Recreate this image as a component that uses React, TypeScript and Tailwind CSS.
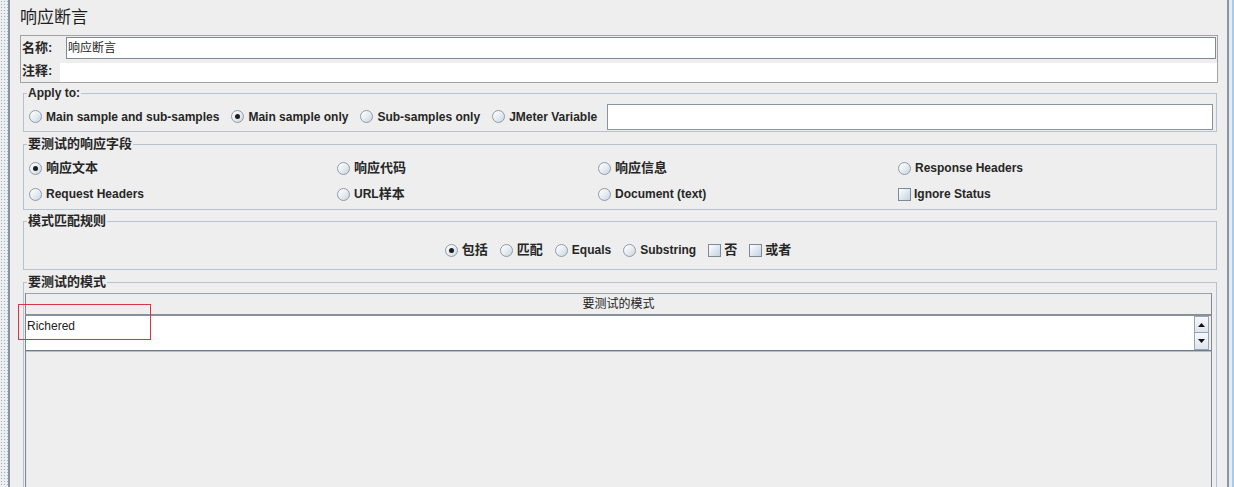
import React from "react";

const FONT = "font-['Liberation_Sans','Noto_Sans_CJK_SC',sans-serif]";

function Radio({ checked = false }: { checked?: boolean }) {
  return (
    <span className="inline-flex h-[13px] w-[13px] shrink-0 items-center justify-center rounded-full border border-[#8e9bab] bg-[linear-gradient(135deg,#ffffff_0%,#e8edf2_50%,#c9d3de_100%)]">
      {checked && <span className="h-[5px] w-[5px] rounded-full bg-[#1e1e1e]" />}
    </span>
  );
}

function Check() {
  return (
    <span className="inline-block h-[13px] w-[13px] shrink-0 border border-[#7d8b99] bg-[linear-gradient(135deg,#ffffff_0%,#e0e8f0_50%,#c3d1e0_100%)]" />
  );
}

function Cjk({ children }: { children: React.ReactNode }) {
  return <span className="text-[13px]">{children}</span>;
}

function Opt({ checked = false, children }: { checked?: boolean; children: React.ReactNode }) {
  return (
    <label className="flex items-center gap-[4px] whitespace-nowrap">
      <Radio checked={checked} />
      <span>{children}</span>
    </label>
  );
}

function CheckOpt({ children }: { children: React.ReactNode }) {
  return (
    <label className="flex items-center gap-[3px] whitespace-nowrap">
      <Check />
      <span>{children}</span>
    </label>
  );
}

function Group({
  title,
  cjk = false,
  className = "",
  children,
}: {
  title: string;
  cjk?: boolean;
  className?: string;
  children: React.ReactNode;
}) {
  return (
    <fieldset className={`ml-[13px] mr-[10px] min-w-0 shrink-0 border border-[#b7c3d0] ${className}`}>
      <legend
        className={`ml-[3px] px-[1px] font-bold leading-[14px] text-[#262626] ${cjk ? "text-[13px]" : "text-[12px]"}`}
      >
        {title}
      </legend>
      {children}
    </fieldset>
  );
}

function Arrow({ up }: { up: boolean }) {
  return (
    <svg width="7" height="4" viewBox="0 0 7 4">
      {up ? <polygon points="0,4 7,4 3.5,0" fill="#111" /> : <polygon points="0,0 7,0 3.5,4" fill="#111" />}
    </svg>
  );
}

export default function App() {
  return (
    <div className={`relative flex h-[487px] w-[1234px] overflow-hidden bg-[#eeeeee] text-[12px] text-[#262626] ${FONT}`}>
      <div className="w-[8px] shrink-0 bg-[#eceef2] bg-[radial-gradient(#a9b1bc_0.8px,transparent_1px)] bg-[length:3px_3px]" />
      <div className="w-[2px] shrink-0 bg-[#8593a3]" />

      <div className="flex min-w-0 flex-1 flex-col">
        <div className="flex h-[35px] shrink-0 items-center pl-[10px] pt-[1px] text-[17px] text-[#1e1e1e]">响应断言</div>

        <div className="ml-[10px] mr-[9px] flex h-[48px] shrink-0 flex-col border border-[#a3a3a3]">
          <div className="flex h-[24px] items-center">
            <span className="w-[45px] pl-[1px] text-[13px] font-bold">名称:</span>
            <div className="mr-[1px] flex h-[22px] flex-1 items-center border border-[#7f8a96] bg-white pl-[1px] text-[12px]">
              响应断言
            </div>
          </div>
          <div className="flex h-[22px] items-center">
            <span className="w-[39px] pl-[1px] text-[13px] font-bold">注释:</span>
            <div className="h-[19px] flex-1 self-end bg-white" />
          </div>
        </div>

        <Group title="Apply to:" className="mt-[3px]">
          <div className="flex h-[31px] items-center pl-[5px] pr-[3px] pt-[2px] font-bold">
            <div className="flex items-center gap-[12px]">
              <Opt>Main sample and sub-samples</Opt>
              <Opt checked>Main sample only</Opt>
              <Opt>Sub-samples only</Opt>
              <Opt>JMeter Variable</Opt>
            </div>
            <div className="ml-[10px] h-[26px] flex-1 border border-[#8a949e] bg-white" />
          </div>
        </Group>

        <Group title="要测试的响应字段" cjk className="mt-[5px]">
          <div className="grid grid-cols-[308px_261px_300px_1fr] pb-[2px] pl-[5px] pt-[4px] font-bold">
            <div className="flex h-[26px] items-center">
              <Opt checked>
                <Cjk>响应文本</Cjk>
              </Opt>
            </div>
            <div className="flex h-[26px] items-center">
              <Opt>
                <Cjk>响应代码</Cjk>
              </Opt>
            </div>
            <div className="flex h-[26px] items-center">
              <Opt>
                <Cjk>响应信息</Cjk>
              </Opt>
            </div>
            <div className="flex h-[26px] items-center">
              <Opt>Response Headers</Opt>
            </div>
            <div className="flex h-[26px] items-center">
              <Opt>Request Headers</Opt>
            </div>
            <div className="flex h-[26px] items-center">
              <Opt>
                URL<Cjk>样本</Cjk>
              </Opt>
            </div>
            <div className="flex h-[26px] items-center">
              <Opt>Document (text)</Opt>
            </div>
            <div className="flex h-[26px] items-center">
              <CheckOpt>Ignore Status</CheckOpt>
            </div>
          </div>
        </Group>

        <Group title="模式匹配规则" cjk className="mt-[4px]">
          <div className="flex h-[41px] items-start justify-center pr-[4px] pt-[9px] font-bold">
            <div className="flex h-[26px] items-center gap-[12px]">
              <Opt checked>
                <Cjk>包括</Cjk>
              </Opt>
              <Opt>
                <Cjk>匹配</Cjk>
              </Opt>
              <Opt>Equals</Opt>
              <Opt>Substring</Opt>
              <CheckOpt>
                <Cjk>否</Cjk>
              </CheckOpt>
              <CheckOpt>
                <Cjk>或者</Cjk>
              </CheckOpt>
            </div>
          </div>
        </Group>

        <Group title="要测试的模式" cjk className="mt-[5px]">
          <div className="pl-[1px] pr-[4px] pt-[4px]">
            <div className="flex h-[260px] flex-col border-x border-[#7d8996]">
              <div className="flex h-[23px] shrink-0 items-center justify-center border-b-2 border-t border-b-[#86919c] border-t-[#9aa4ae] bg-[#eeeeee] text-[12px] font-normal text-[#222]">
                要测试的模式
              </div>
              <div className="flex h-[34px] shrink-0 bg-white">
                <div className="flex-1 pl-[1px] pt-[2px] text-[12px] leading-[16px] text-[#222]">Richered</div>
                <div className="flex w-[15px] flex-col">
                  <div className="flex h-[17px] items-center justify-center border border-[#9aa5b1] bg-[linear-gradient(#f6f8fb,#dfe5ec)]">
                    <Arrow up />
                  </div>
                  <div className="flex h-[17px] items-center justify-center border border-t-0 border-[#9aa5b1] bg-[linear-gradient(#f6f8fb,#dfe5ec)]">
                    <Arrow up={false} />
                  </div>
                </div>
                <div className="w-[2px] bg-[#eeeeee]" />
              </div>
              <div className="h-[2px] shrink-0 border-t border-b border-t-[#6f7b88] border-b-[#b5bec8]" />
              <div className="flex-1 border-l border-[#dfe6ee] bg-[#eeeeee]" />
            </div>
          </div>
        </Group>
      </div>

      <div className="w-[2px] shrink-0 bg-[#8a96a3]" />
      <div className="w-[3px] shrink-0 bg-[#e3eaf2]" />
      <div className="w-[2px] shrink-0 bg-[#a8cbec]" />

      <div className="pointer-events-none absolute left-[18px] top-[304px] h-[36px] w-[133px] border border-[#dd3346]" />
    </div>
  );
}
